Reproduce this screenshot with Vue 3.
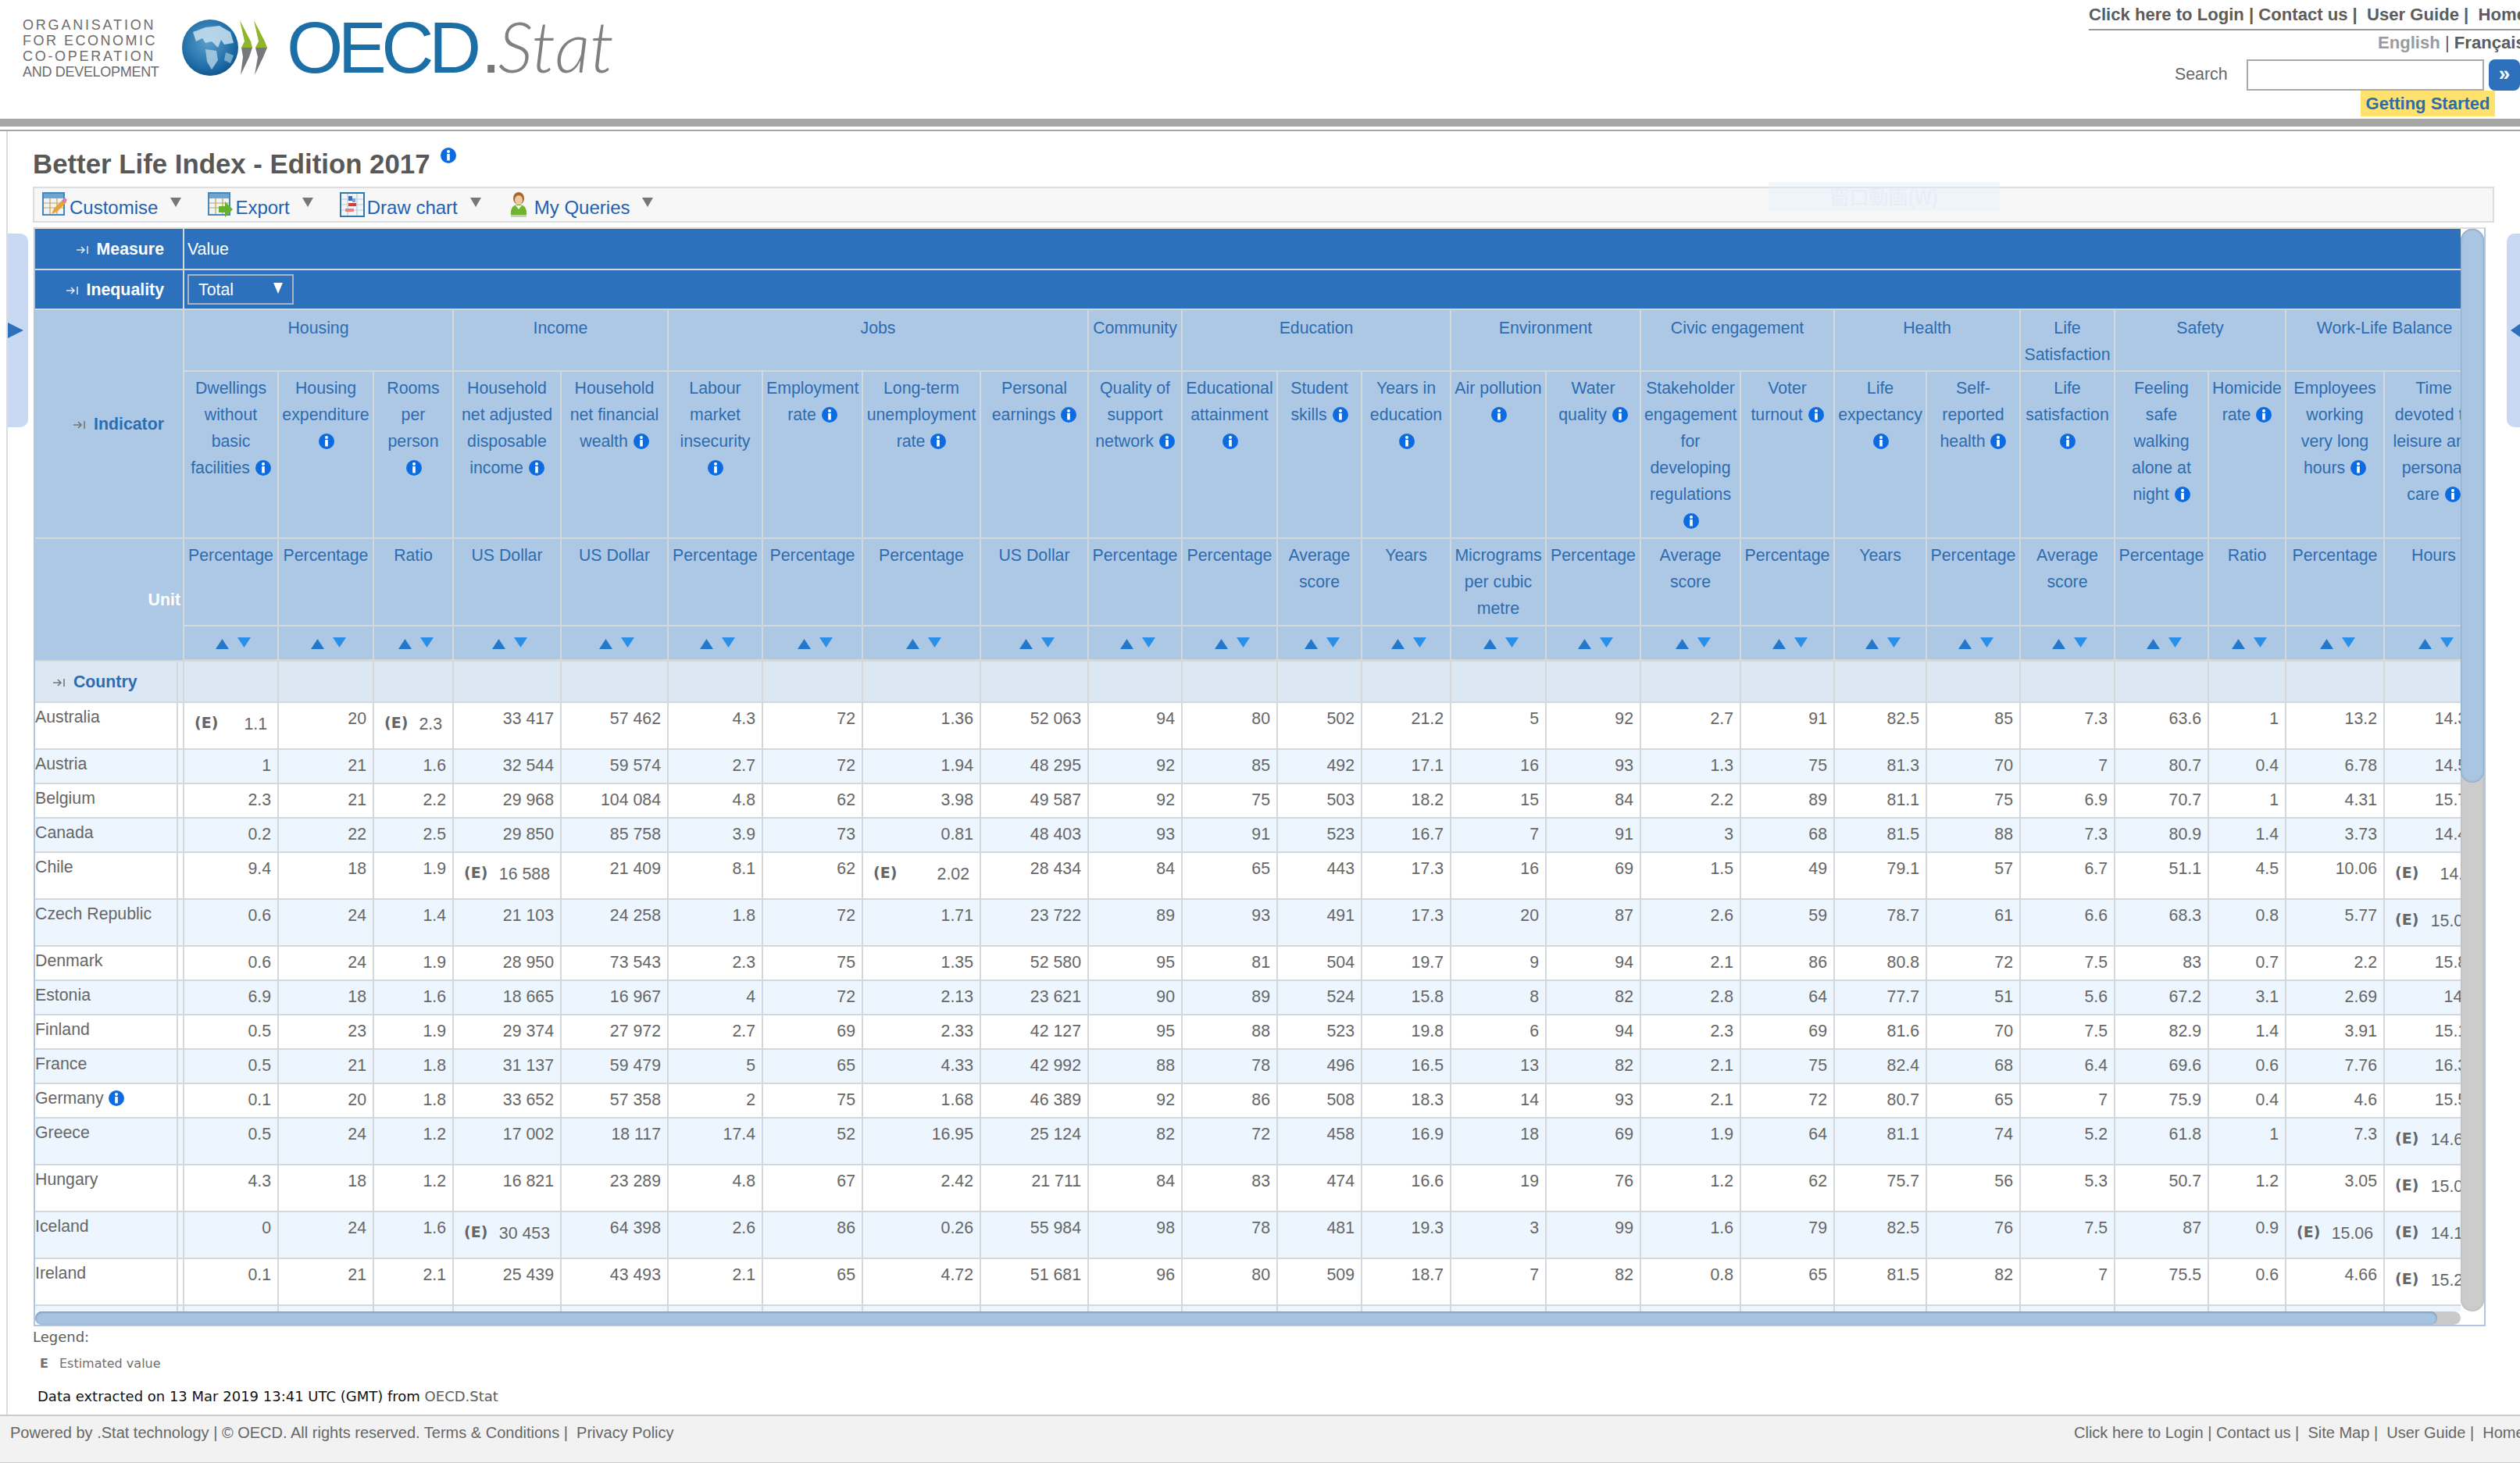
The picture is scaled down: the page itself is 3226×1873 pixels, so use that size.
<script setup>
const edges = [45, 228, 236, 357, 479, 581, 719, 856, 977, 1105, 1256, 1394, 1514, 1636, 1744, 1858, 1980, 2101, 2229, 2349, 2467, 2587, 2708, 2828, 2927, 3053, 3180]
const colWidths = edges.slice(1).map((x, i) => x - edges[i])

const categories = [
  { name: 'Housing', span: 3 },
  { name: 'Income', span: 2 },
  { name: 'Jobs', span: 4 },
  { name: 'Community', span: 1 },
  { name: 'Education', span: 3 },
  { name: 'Environment', span: 2 },
  { name: 'Civic engagement', span: 2 },
  { name: 'Health', span: 2 },
  { name: 'Life Satisfaction', span: 1 },
  { name: 'Safety', span: 2 },
  { name: 'Work-Life Balance', span: 2 }
]

const indicators = [
  ['Dwellings without basic facilities', 'Percentage'],
  ['Housing expenditure', 'Percentage'],
  ['Rooms per person', 'Ratio'],
  ['Household net adjusted disposable income', 'US Dollar'],
  ['Household net financial wealth', 'US Dollar'],
  ['Labour market insecurity', 'Percentage'],
  ['Employment rate', 'Percentage'],
  ['Long-term unemployment rate', 'Percentage'],
  ['Personal earnings', 'US Dollar'],
  ['Quality of support network', 'Percentage'],
  ['Educational attainment', 'Percentage'],
  ['Student skills', 'Average score'],
  ['Years in education', 'Years'],
  ['Air pollution', 'Micrograms per cubic metre'],
  ['Water quality', 'Percentage'],
  ['Stakeholder engagement for developing regulations', 'Average score'],
  ['Voter turnout', 'Percentage'],
  ['Life expectancy', 'Years'],
  ['Self-reported health', 'Percentage'],
  ['Life satisfaction', 'Average score'],
  ['Feeling safe walking alone at night', 'Percentage'],
  ['Homicide rate', 'Ratio'],
  ['Employees working very long hours', 'Percentage'],
  ['Time devoted to leisure and personal care', 'Hours']
]

// E: marks an estimated value
const rawRows = [
  ['Australia', 'E:1.1,20,E:2.3,33 417,57 462,4.3,72,1.36,52 063,94,80,502,21.2,5,92,2.7,91,82.5,85,7.3,63.6,1,13.2,14.35'],
  ['Austria', '1,21,1.6,32 544,59 574,2.7,72,1.94,48 295,92,85,492,17.1,16,93,1.3,75,81.3,70,7,80.7,0.4,6.78,14.55'],
  ['Belgium', '2.3,21,2.2,29 968,104 084,4.8,62,3.98,49 587,92,75,503,18.2,15,84,2.2,89,81.1,75,6.9,70.7,1,4.31,15.71'],
  ['Canada', '0.2,22,2.5,29 850,85 758,3.9,73,0.81,48 403,93,91,523,16.7,7,91,3,68,81.5,88,7.3,80.9,1.4,3.73,14.41'],
  ['Chile', '9.4,18,1.9,E:16 588,21 409,8.1,62,E:2.02,28 434,84,65,443,17.3,16,69,1.5,49,79.1,57,6.7,51.1,4.5,10.06,E:14.4'],
  ['Czech Republic', '0.6,24,1.4,21 103,24 258,1.8,72,1.71,23 722,89,93,491,17.3,20,87,2.6,59,78.7,61,6.6,68.3,0.8,5.77,E:15.03'],
  ['Denmark', '0.6,24,1.9,28 950,73 543,2.3,75,1.35,52 580,95,81,504,19.7,9,94,2.1,86,80.8,72,7.5,83,0.7,2.2,15.87'],
  ['Estonia', '6.9,18,1.6,18 665,16 967,4,72,2.13,23 621,90,89,524,15.8,8,82,2.8,64,77.7,51,5.6,67.2,3.1,2.69,14.9'],
  ['Finland', '0.5,23,1.9,29 374,27 972,2.7,69,2.33,42 127,95,88,523,19.8,6,94,2.3,69,81.6,70,7.5,82.9,1.4,3.91,15.17'],
  ['France', '0.5,21,1.8,31 137,59 479,5,65,4.33,42 992,88,78,496,16.5,13,82,2.1,75,82.4,68,6.4,69.6,0.6,7.76,16.36'],
  ['Germany', '0.1,20,1.8,33 652,57 358,2,75,1.68,46 389,92,86,508,18.3,14,93,2.1,72,80.7,65,7,75.9,0.4,4.6,15.54'],
  ['Greece', '0.5,24,1.2,17 002,18 117,17.4,52,16.95,25 124,82,72,458,16.9,18,69,1.9,64,81.1,74,5.2,61.8,1,7.3,E:14.66'],
  ['Hungary', '4.3,18,1.2,16 821,23 289,4.8,67,2.42,21 711,84,83,474,16.6,19,76,1.2,62,75.7,56,5.3,50.7,1.2,3.05,E:15.04'],
  ['Iceland', '0,24,1.6,E:30 453,64 398,2.6,86,0.26,55 984,98,78,481,19.3,3,99,1.6,79,82.5,76,7.5,87,0.9,E:15.06,E:14.15'],
  ['Ireland', '0.1,21,2.1,25 439,43 493,2.1,65,4.72,51 681,96,80,509,18.7,7,82,0.8,65,81.5,82,7,75.5,0.6,4.66,E:15.28']
]

const rows = rawRows.map(([name, line]) => {
  const cells = line.split(',').map((v) => ({
    est: v.startsWith('E:'),
    value: v.replace('E:', '')
  }))
  return { name, cells, tall: cells.some((c) => c.est) }
})
</script>

<template>
  <div class="page">
    <header class="head">
      <div class="logo">
        <div class="org">
          <span class="l1">ORGANISATION</span>
          <span class="l2">FOR ECONOMIC</span>
          <span class="l3">CO-OPERATION</span>
          <span class="l4">AND DEVELOPMENT</span>
        </div>
        <svg class="mark" width="109" height="72" viewBox="0 0 109 72">
          <defs>
            <radialGradient id="globe" cx="0.45" cy="0.4" r="0.65">
              <stop offset="0" stop-color="#5c9fcb" />
              <stop offset="0.7" stop-color="#1f6ea8" />
              <stop offset="1" stop-color="#0e4f86" />
            </radialGradient>
          </defs>
          <ellipse cx="36" cy="36" rx="36" ry="36" fill="url(#globe)" />
          <path d="M14 16 L30 10 L48 8 L62 16 L66 30 L54 32 L50 26 L46 36 L38 28 L30 30 L26 24 L18 28 Z" fill="#c9e0ee" opacity="0.85" />
          <path d="M30 38 L44 40 L46 52 L38 64 L32 54 Z" fill="#b4d3e6" opacity="0.8" />
          <path d="M56 42 L66 46 L62 56 L54 52 Z" fill="#b4d3e6" opacity="0.6" />
          <path d="M74 1 L88 28 L90 36 L76 36 L80 28 Z" fill="#8fb52a" />
          <path d="M92 1 L106 28 L109 36 L94 36 L98 28 Z" fill="#8fb52a" />
          <path d="M76 36 L90 36 L86 48 L75 71 L78 48 Z" fill="#77787b" />
          <path d="M94 36 L109 36 L104 48 L93 71 L97 48 Z" fill="#77787b" />
        </svg>
        <div class="brand"><span class="oecd">OECD</span><span class="dot">.</span><span class="stat">Stat</span></div>
      </div>
      <div class="head-right">
        <div class="toplinks">Click here to Login | Contact us |&nbsp; User Guide |&nbsp; Home</div>
        <div class="lang"><span class="en">English</span> | <b>Français</b></div>
        <div class="search">
          <span class="search-label">Search</span>
          <input class="search-input" type="text" />
          <button class="search-go">»</button>
        </div>
        <div class="started">Getting Started</div>
      </div>
    </header>
    <div class="bar"></div>
    <div class="bar-thin"></div>

    <main class="main">
      <div class="pane pane-left"><i class="tri-right"></i></div>

      <div class="content">
        <h1 class="title">Better Life Index - Edition 2017
          <svg class="info title-info" viewBox="0 0 20 20"><circle cx="10" cy="10" r="10" fill="#0d6be2" /><circle cx="10" cy="5" r="2" fill="#fff" /><rect x="8.2" y="8" width="3.6" height="8.5" fill="#fff" /></svg>
        </h1>

        <div class="toolbar">
          <div class="tool">
            <svg class="tool-icon" viewBox="0 0 32 32"><rect x="1" y="1" width="27" height="28" fill="#eef4fa" stroke="#4a86b8" stroke-width="2" /><rect x="2" y="2" width="25" height="6" fill="#6ea4d0" /><path d="M2 14h25M2 20h25M10 8v20M19 8v20" stroke="#c7a24e" stroke-width="1.2" /><path d="M12 28l3-7 12-12 4 4-12 12z" fill="#e9a23b" /><path d="M25 11l4-4 3 3-3 4z" fill="#d97cb4" /></svg>
            <span class="tool-text">Customise</span><i class="caret"></i>
          </div>
          <div class="tool">
            <svg class="tool-icon" viewBox="0 0 32 32"><rect x="1" y="1" width="27" height="28" fill="#eef4fa" stroke="#4a86b8" stroke-width="2" /><rect x="2" y="2" width="25" height="6" fill="#6ea4d0" /><path d="M2 14h25M2 20h25M10 8v20M19 8v20" stroke="#c7a24e" stroke-width="1.2" /><path d="M14 18h8v-6l10 10-10 10v-6h-8z" fill="#63b32e" /></svg>
            <span class="tool-text">Export</span><i class="caret"></i>
          </div>
          <div class="tool tool-wide">
            <svg class="tool-icon" viewBox="0 0 32 32"><rect x="1" y="1" width="30" height="30" fill="#f2f6fa" stroke="#2f7aa8" stroke-width="2" /><path d="M2 9h28M2 16h28M2 23h28M10 2v28M22 2v28" stroke="#b9cbd8" stroke-width="1.2" /><rect x="11" y="5" width="5" height="6" fill="#3a6fb0" /><rect x="11" y="14" width="10" height="4" fill="#d93b3b" /><rect x="7" y="21" width="11" height="4" fill="#e8837f" /><rect x="16" y="8" width="4" height="5" fill="#7aa7cc" /></svg>
            <span class="tool-text">Draw chart</span><i class="caret"></i>
          </div>
          <div class="tool">
            <svg class="tool-icon person" viewBox="0 0 24 32"><ellipse cx="12" cy="8" rx="7" ry="8" fill="#a5672f" /><ellipse cx="12" cy="10" rx="5" ry="6" fill="#f0c8a0" /><path d="M2 30c-1-10 3-14 10-14s11 4 10 14z" fill="#6fb52e" /><path d="M8 17l4 5 4-5z" fill="#fff" /><rect x="2" y="29" width="20" height="3" fill="#c9c9c9" /></svg>
            <span class="tool-text">My Queries</span><i class="caret"></i>
          </div>
        </div>
        <div class="ghost">窗口動画(W)</div>

        <div class="frame">
          <div class="frame-top">
            <div class="viewport">
              <table class="cube">
                <colgroup>
                  <col v-for="(w, i) in colWidths" :key="i" :style="{ width: w + 'px' }" />
                </colgroup>
                <tbody>
                  <tr class="r-measure">
                    <td colspan="2" class="dim dark">
                      <svg class="pin" viewBox="0 0 16 12"><path d="M0 6h10M6 2l4 4-4 4M14 1v10" fill="none" stroke="#dfe8f2" stroke-width="1.6" /></svg>
                      Measure
                    </td>
                    <td colspan="24" class="dark-value">Value</td>
                  </tr>
                  <tr class="r-ineq">
                    <td colspan="2" class="dim dark">
                      <svg class="pin" viewBox="0 0 16 12"><path d="M0 6h10M6 2l4 4-4 4M14 1v10" fill="none" stroke="#dfe8f2" stroke-width="1.6" /></svg>
                      Inequality
                    </td>
                    <td colspan="24" class="dark-value">
                      <div class="select"><span>Total</span><i class="select-arrow"></i></div>
                    </td>
                  </tr>
                  <tr class="r-cat">
                    <td colspan="2" rowspan="2" class="dim light">
                      <svg class="pin" viewBox="0 0 16 12"><path d="M0 6h10M6 2l4 4-4 4M14 1v10" fill="none" stroke="#777" stroke-width="1.6" /></svg>
                      Indicator
                    </td>
                    <td v-for="c in categories" :key="c.name" :colspan="c.span" class="hd hd-cat">{{ c.name }}</td>
                  </tr>
                  <tr class="r-ind">
                    <td v-for="ind in indicators" :key="ind[0]" class="hd">
                      {{ ind[0] }}
                      <svg class="info ind-info" viewBox="0 0 20 20"><circle cx="10" cy="10" r="10" fill="#0d6be2" /><circle cx="10" cy="5" r="2" fill="#fff" /><rect x="8.2" y="8" width="3.6" height="8.5" fill="#fff" /></svg>
                    </td>
                  </tr>
                  <tr class="r-unit">
                    <td colspan="2" rowspan="2" class="dim unit">Unit</td>
                    <td v-for="ind in indicators" :key="ind[0]" class="hd">{{ ind[1] }}</td>
                  </tr>
                  <tr class="r-sort">
                    <td v-for="ind in indicators" :key="ind[0]" class="sort">
                      <div class="sort-in">
                        <svg width="17" height="13" viewBox="0 0 17 13"><path d="M8.5 0L17 13H0z" fill="#2378cc" /></svg>
                        <svg class="sort-down" width="17" height="13" viewBox="0 0 17 13"><path d="M0 0h17L8.5 13z" fill="#2a8fe6" /></svg>
                      </div>
                    </td>
                  </tr>
                  <tr class="r-country">
                    <td class="country">
                      <svg class="pin" viewBox="0 0 16 12"><path d="M0 6h10M6 2l4 4-4 4M14 1v10" fill="none" stroke="#777" stroke-width="1.6" /></svg>
                      Country
                    </td>
                    <td></td>
                    <td v-for="ind in indicators" :key="ind[0]"></td>
                  </tr>
                  <tr v-for="(row, r) in rows" :key="row.name" class="data" :class="{ tall: row.tall, alt: r % 2 === 1 }">
                    <td class="name">
                      {{ row.name }}
                      <svg v-if="row.name === 'Germany'" class="info" viewBox="0 0 20 20"><circle cx="10" cy="10" r="10" fill="#0d6be2" /><circle cx="10" cy="5" r="2" fill="#fff" /><rect x="8.2" y="8" width="3.6" height="8.5" fill="#fff" /></svg>
                    </td>
                    <td></td>
                    <td v-for="(c, i) in row.cells" :key="i" class="num">
                      <div v-if="c.est" class="est"><span class="flag">(E)</span><span class="est-val">{{ c.value }}</span></div>
                      <template v-else>{{ c.value }}</template>
                    </td>
                  </tr>
                  <tr class="data tall alt">
                    <td></td>
                    <td></td>
                    <td v-for="ind in indicators" :key="ind[0]"></td>
                  </tr>
                </tbody>
              </table>
            </div>
            <div class="vbar"><div class="vthumb"></div></div>
          </div>
          <div class="frame-bottom">
            <div class="hbar"><div class="hthumb"></div></div>
            <div class="corner"></div>
          </div>
        </div>

        <div class="legend">Legend:</div>
        <div class="legend-row"><b>E</b><span>Estimated value</span></div>
        <div class="extract">Data extracted on 13 Mar 2019 13:41 UTC (GMT) from <span class="src">OECD.Stat</span></div>
      </div>

      <div class="pane pane-right"><i class="tri-left"></i></div>
    </main>

    <footer class="foot">
      <div>Powered by .Stat technology | © OECD. All rights reserved. Terms &amp; Conditions |&nbsp; Privacy Policy</div>
      <div class="foot-right">Click here to Login | Contact us |&nbsp; Site Map |&nbsp; User Guide |&nbsp; Home</div>
    </footer>
  </div>
</template>

<style>
html, body {
  margin: 0;
  background: #fff;
}
</style>

<style scoped>
.page {
  width: 3226px;
  height: 1873px;
  overflow: hidden;
  display: flex;
  flex-direction: column;
  font-family: "Liberation Sans", Arial, sans-serif;
  color: #666;
  background: #fff;
}

.head {
  height: 152px;
  flex: none;
  display: flex;
  justify-content: space-between;
}
.logo {
  display: flex;
  align-items: flex-start;
  padding: 22px 0 0 29px;
}
.org {
  width: 171px;
  display: flex;
  flex-direction: column;
  font-size: 18px;
  line-height: 20px;
  color: #6c6c6c;
  white-space: nowrap;
}
.l1 { letter-spacing: 2.8px; }
.l2 { letter-spacing: 2.5px; }
.l3 { letter-spacing: 2.7px; }
.l4 { letter-spacing: -0.3px; }
.mark {
  margin: 3px 0 0 33px;
  flex: none;
}
.brand {
  margin: -17px 0 0 25px;
  line-height: 106px;
  white-space: nowrap;
}
.oecd {
  font-size: 93px;
  letter-spacing: -6.5px;
  color: #1c6ea6;
}
.dot {
  font-size: 93px;
  color: #777;
  margin-left: 6px;
}
.stat {
  font-family: Lato, "Open Sans", sans-serif;
  font-style: italic;
  font-weight: 300;
  font-size: 90px;
  color: #808080;
  margin-left: -4px;
}

.head-right {
  width: 552px;
  flex: none;
}
.toplinks {
  height: 37px;
  line-height: 38px;
  font-size: 22.1px;
  font-weight: bold;
  color: #5c5c5c;
  white-space: nowrap;
  border-bottom: 2px solid #999;
}
.lang {
  padding-left: 370px;
  height: 37px;
  line-height: 32px;
  font-size: 22.1px;
  color: #5c5c5c;
  white-space: nowrap;
}
.en {
  color: #9a9a9a;
  font-weight: bold;
}
.search {
  display: flex;
  align-items: center;
  height: 40px;
  padding-left: 110px;
}
.search-label {
  width: 92px;
  font-size: 21.3px;
  color: #666;
  margin-top: -2px;
}
.search-input {
  box-sizing: border-box;
  width: 304px;
  height: 40px;
  border: 2px solid #aaa;
  background: #fff;
  padding: 0;
}
.search-go {
  box-sizing: border-box;
  flex: none;
  width: 40px;
  height: 40px;
  margin-left: 6px;
  border: 0;
  border-radius: 8px;
  background: #2d71bc;
  color: #fff;
  font: bold 26px "Liberation Sans", Arial, sans-serif;
  padding: 0 0 4px;
}
.started {
  margin-left: 348px;
  width: 172px;
  height: 33px;
  background: #ffe16e;
  color: #2d6cab;
  font-size: 22px;
  font-weight: bold;
  line-height: 33px;
  text-align: center;
  white-space: nowrap;
}

.bar {
  flex: none;
  height: 10px;
  background: #a6a6a6;
}
.bar-thin {
  flex: none;
  height: 2px;
  margin-top: 4px;
  background: #a6a6a6;
}

.main {
  flex: 1;
  display: flex;
  min-height: 0;
  margin-left: 8px;
  border-left: 2px solid #ddd;
}
.pane {
  flex: none;
  margin-top: 131px;
  height: 248px;
  background: #c9d9f3;
  display: flex;
  align-items: center;
}
.pane-left {
  width: 26px;
  border-radius: 0 10px 10px 0;
}
.pane-right {
  width: 17px;
  margin-left: 16px;
  border-radius: 10px 0 0 10px;
  padding-left: 5px;
}
.tri-right {
  display: block;
  border-left: 20px solid #2d71bc;
  border-top: 10px solid transparent;
  border-bottom: 10px solid transparent;
}
.tri-left {
  display: block;
  border-right: 14px solid #2d71bc;
  border-top: 10px solid transparent;
  border-bottom: 10px solid transparent;
}

.content {
  flex: none;
  width: 3151px;
  margin-left: 6px;
  position: relative;
}
.title {
  margin: 0;
  height: 71px;
  box-sizing: border-box;
  padding: 21px 0 0 0;
  font-size: 34.8px;
  line-height: 36px;
  font-weight: bold;
  color: #585858;
  white-space: nowrap;
}
.info {
  width: 20px;
  height: 20px;
  vertical-align: -3px;
}
.ind-info {
  margin-left: 1px;
}
.title-info {
  vertical-align: 13px;
  margin-left: 4px;
}

.toolbar {
  box-sizing: border-box;
  height: 46px;
  display: flex;
  align-items: center;
  padding-left: 10px;
  background: #f7f7f7;
  border: 2px solid #ddd;
  font-size: 24px;
  color: #1f62b4;
}
.tool {
  display: flex;
  align-items: center;
  margin-right: 34px;
}
.tool-wide {
  margin-right: 36px;
}
.tool-text {
  padding-top: 8px;
}
.tool-icon {
  width: 32px;
  height: 32px;
  margin-right: 3px;
}
.person {
  width: 24px;
  margin-right: 8px;
}
.caret {
  display: block;
  margin: -6px 0 0 16px;
  border-top: 12px solid #777;
  border-left: 7px solid transparent;
  border-right: 7px solid transparent;
}
.ghost {
  position: absolute;
  left: 2222px;
  top: 65px;
  width: 296px;
  height: 37px;
  background: rgba(228, 240, 252, 0.45);
  color: #e6edf5;
  font: 25px/37px "Noto Sans CJK JP", sans-serif;
  text-align: center;
}

.frame {
  box-sizing: border-box;
  width: 3139px;
  margin: 6px 0 0 1px;
  border: 2px solid #adc7e3;
  border-top-color: #ddd;
}
.frame-top {
  display: flex;
}
.viewport {
  width: 3105px;
  height: 1386px;
  overflow: hidden;
  flex: none;
}
.vbar {
  width: 30px;
  height: 1386px;
  flex: none;
  background: #cccccc;
  border-radius: 15px;
  box-shadow: inset 0 0 3px #aaa;
}
.vthumb {
  height: 709px;
  background: #a9c5e2;
  border-radius: 15px;
  box-shadow: inset 0 0 3px #6d8aa8;
}
.frame-bottom {
  display: flex;
  height: 17px;
}
.hbar {
  width: 3105px;
  flex: none;
  background: #c9c9c9;
  border-radius: 9px;
}
.hthumb {
  width: 3075px;
  height: 100%;
  background: #a6c3e0;
  border-radius: 9px;
  box-shadow: inset 0 1px 3px #6d8aa8;
}
.corner {
  flex: 1;
  background: #fff;
}

.cube {
  table-layout: fixed;
  width: 3135px;
  border-collapse: separate;
  border-spacing: 0;
  font-size: 21.3px;
  line-height: 34px;
}
.cube td {
  box-sizing: border-box;
  padding: 0;
  border-right: 2px solid #d5d8db;
  border-bottom: 2px solid #d5d8db;
  vertical-align: top;
}
.r-measure { height: 53px; }
.r-ineq { height: 51px; }
.r-cat { height: 79px; }
.r-ind { height: 214px; }
.r-unit { height: 112px; }
.r-sort { height: 45px; }
.r-country { height: 53px; background: #dce7f4; }

.cube .dim {
  vertical-align: middle;
  text-align: right;
  font-weight: bold;
  padding-right: 24px;
  white-space: nowrap;
}
.dark {
  background: #2d71bc;
  color: #fff;
}
.cube .dark-value {
  background: #2d71bc;
  color: #fff;
  vertical-align: middle;
  padding-left: 4px;
}
.light {
  background: #adc8e4;
  color: #2d6cb0;
}
.cube .unit {
  background: #adc8e4;
  color: #fff;
  padding-right: 3px;
}
.pin {
  width: 16px;
  height: 12px;
  margin-right: 4px;
}
.select {
  box-sizing: border-box;
  width: 136px;
  height: 39px;
  border: 2px solid #a9b5c3;
  display: flex;
  align-items: center;
  justify-content: space-between;
  padding: 0 12px;
}
.select-arrow {
  display: block;
  margin-top: -4px;
  border-top: 14px solid #fff;
  border-left: 6px solid transparent;
  border-right: 6px solid transparent;
}
.hd {
  background: #adc8e4;
  color: #2d6cb0;
  text-align: center;
  padding: 4px 4px 0 !important;
}
.hd-cat {
  padding-top: 6px !important;
}
.sort {
  background: #adc8e4;
  border-bottom-width: 3px !important;
  vertical-align: middle !important;
}
.sort-in {
  display: flex;
  justify-content: center;
  gap: 11px;
  align-items: flex-start;
  padding-left: 6px;
}
.sort-in svg {
  margin-top: 2px;
}
.sort-in .sort-down {
  margin-top: 0;
}
.country {
  vertical-align: middle !important;
  padding-left: 23px !important;
  color: #2d6cb0;
  font-weight: bold;
  white-space: nowrap;
}
.data {
  height: 44px;
  background: #fff;
}
.data.tall { height: 60px; }
.data.alt { background: #edf6fe; }
.name {
  padding-top: 6px !important;
  line-height: 24px;
  white-space: nowrap;
}
.num {
  padding: 8px 8px 0 0 !important;
  text-align: right;
  line-height: 24px;
  white-space: nowrap;
}
.est {
  display: flex;
  justify-content: space-between;
  padding-left: 13px;
  padding-right: 5px;
}
.flag {
  font: bold 19px/24px "DejaVu Sans", sans-serif;
  padding-top: 5px;
}
.est-val {
  padding-top: 7px;
}

.legend {
  margin: 2px 0 0 0;
  font: 18px/24px "DejaVu Sans", sans-serif;
  color: #5c5c5c;
}
.legend-row {
  margin: 10px 0 0 9px;
  font: 16px/24px "DejaVu Sans", sans-serif;
  color: #6e6e6e;
  display: flex;
  gap: 14px;
}
.extract {
  margin: 18px 0 0 6px;
  font: 18px/24px "DejaVu Sans", sans-serif;
  color: #111;
  white-space: nowrap;
}
.src { color: #5c5c5c; }

.foot {
  box-sizing: border-box;
  height: 62px;
  flex: none;
  display: flex;
  justify-content: space-between;
  padding: 8px 0 0 13px;
  background: #f2f2f2;
  border-top: 2px solid #ccc;
  border-bottom: 1px solid #ccc;
  font-size: 20px;
  line-height: 26px;
  white-space: nowrap;
  color: #666;
}
.foot-right {
  flex: none;
  width: 571px;
}
</style>
